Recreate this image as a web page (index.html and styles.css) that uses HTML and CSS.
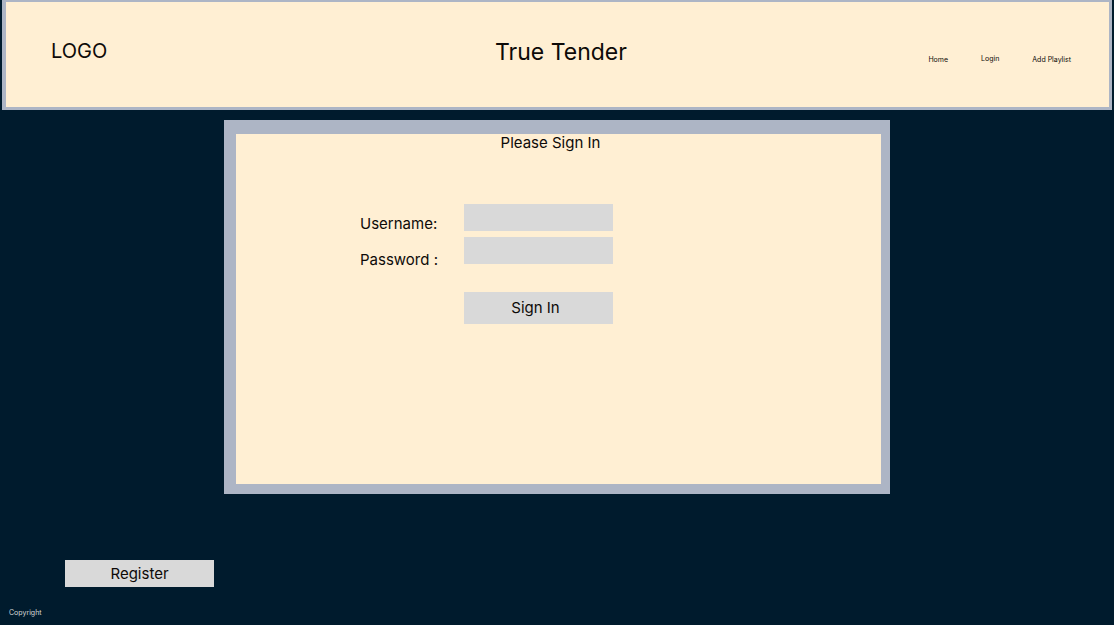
FILE: index.html
```html
<!DOCTYPE html>
<html lang="en">
<head>
<meta charset="utf-8">
<title>True Tender</title>
<link rel="stylesheet" href="styles.css">
</head>
<body class="page">
<header class="site-header">
  <div class="logo">LOGO</div>
  <h1 class="site-title">True Tender</h1>
  <nav class="site-nav">
    <a class="nav-link" href="#home">Home</a>
    <a class="nav-link nav-link-raised" href="#login">Login</a>
    <a class="nav-link" href="#playlist">Add Playlist</a>
  </nav>
</header>
<main class="main">
  <section class="card">
    <h2 class="card-title">Please Sign In</h2>
    <form class="sign-in">
      <div class="labels">
        <label for="username">Username:</label>
        <label for="password">Password :</label>
      </div>
      <div class="fields">
        <input class="field" id="username" type="text">
        <input class="field" id="password" type="password">
        <button class="button submit" type="submit">Sign In</button>
      </div>
    </form>
  </section>
  <button class="button register" type="button">Register</button>
</main>
<footer class="site-footer">Copyright</footer>
</body>
</html>
```

FILE: styles.css
```css
* {
  box-sizing: border-box;
}

.page {
  display: flex;
  flex-direction: column;
  min-height: 100vh;
  margin: 0;
  background: #001b2d;
  color: #0d0a08;
  font-family: Inter, "Liberation Sans", sans-serif;
  font-size: 15px;
  line-height: 18px;
}

.site-header {
  display: grid;
  grid-template-columns: 1fr auto 1fr;
  align-items: center;
  margin: 0 2px;
  padding: 36px 38px 41px 45px;
  border: solid #adb5c5;
  border-width: 2px 3px 3px 4px;
  background: #ffefd3;
}

.logo {
  padding-bottom: 2px;
  font-size: 20px;
  line-height: 24px;
}

.site-title {
  margin: 0;
  font-size: 23px;
  font-weight: 400;
  line-height: 28px;
}

.site-nav {
  display: flex;
  justify-content: flex-end;
  gap: 33px;
  padding-top: 16px;
  font-size: 7px;
  line-height: 10px;
}

.nav-link {
  color: inherit;
  text-decoration: none;
}

.nav-link-raised {
  margin-top: -1px;
}

.main {
  flex: 1;
}

.card {
  min-height: 374px;
  margin: 10px 224px 0;
  border: solid #adb5c5;
  border-width: 14px 9px 10px 12px;
  background: #ffefd3;
}

.card-title {
  margin: 0;
  padding-right: 16px;
  font-size: 15px;
  font-weight: 400;
  text-align: center;
}

.sign-in {
  display: flex;
  margin: 52px 0 0 124px;
}

.labels {
  display: flex;
  flex-direction: column;
  flex: 0 0 104px;
  gap: 18px;
  padding-top: 11px;
}

.fields {
  display: flex;
  flex-direction: column;
  gap: 6px;
  width: 149px;
}

.field {
  width: 100%;
  height: 27px;
  padding: 0 8px;
  border: 0;
  border-radius: 0;
  background: #d9d9d9;
  font: inherit;
}

.button {
  border: 0;
  border-radius: 0;
  background: #d9d9d9;
  color: #0d0a08;
  font: inherit;
}

.submit {
  height: 32px;
  margin-top: 22px;
  padding: 0 6px 0 0;
}

.register {
  display: block;
  width: 149px;
  height: 27px;
  margin: 66px 0 0 65px;
  padding: 0;
}

.site-footer {
  padding: 0 9px 7px;
  color: #d9d9d9;
  font-size: 7px;
  line-height: 10px;
}
```
